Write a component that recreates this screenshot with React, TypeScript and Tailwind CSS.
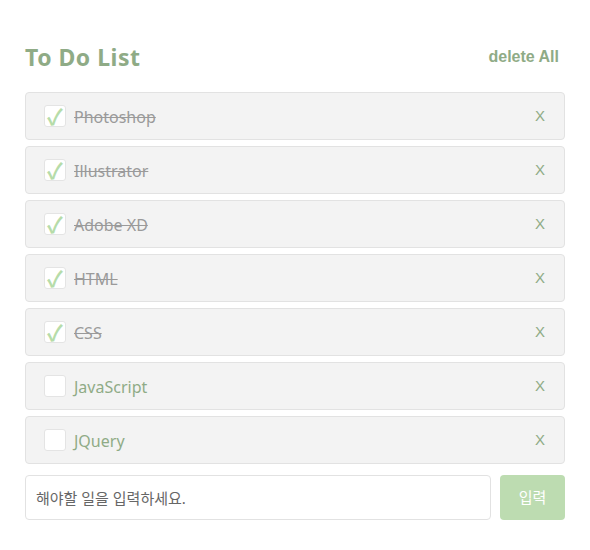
import { useState } from "react";

type Todo = { id: number; text: string; done: boolean };

const initial: Todo[] = [
  { id: 1, text: "Photoshop", done: true },
  { id: 2, text: "Illustrator", done: true },
  { id: 3, text: "Adobe XD", done: true },
  { id: 4, text: "HTML", done: true },
  { id: 5, text: "CSS", done: true },
  { id: 6, text: "JavaScript", done: false },
  { id: 7, text: "JQuery", done: false },
];

export default function App() {
  const [todos, setTodos] = useState(initial);
  const [text, setText] = useState("");

  const toggle = (id: number) =>
    setTodos(todos.map((t) => (t.id === id ? { ...t, done: !t.done } : t)));

  return (
    <div
      className="w-[590px] h-[550px] bg-white px-[25px] pt-[40px]"
      style={{ fontFamily: '"Noto Sans", "Noto Sans CJK KR", sans-serif' }}
    >
      <div className="flex items-center justify-between h-[34px] mb-[18px]">
        <h1 className="text-[23px] font-bold text-[#8fab86] tracking-[0.5px]">
          To Do List
        </h1>
        <button
          onClick={() => setTodos([])}
          className="mr-[6px] text-[16px] font-bold text-[#8fab86]"
          style={{ fontFamily: '"Liberation Sans", Arial, sans-serif' }}
        >
          delete All
        </button>
      </div>

      <ul className="flex flex-col gap-[6px]">
        {todos.map((t) => (
          <li
            key={t.id}
            className="flex items-center h-[48px] bg-[#f3f3f3] border border-[#e2e2e2] rounded-[4px] pl-[18px] pr-[19px]"
          >
            <button
              onClick={() => toggle(t.id)}
              className="flex items-center justify-center w-[22px] h-[22px] bg-white border border-[#e4e4e4] rounded-[3px] text-[#b6dca9] text-[22px] font-bold leading-none"
            >
              {t.done ? "✓" : ""}
            </button>
            <span
              className={`ml-[8px] pt-[1px] flex-1 text-[16px] ${
                t.done ? "line-through text-[#9a9a9a]" : "text-[#8fab86]"
              }`}
            >
              {t.text}
            </span>
            <button
              onClick={() => setTodos(todos.filter((x) => x.id !== t.id))}
              className="text-[15px] text-[#8fab86]"
              style={{ fontFamily: '"Liberation Sans", Arial, sans-serif' }}
            >
              X
            </button>
          </li>
        ))}
      </ul>

      <div className="flex gap-[9px] mt-[11px]">
        <input
          value={text}
          onChange={(e) => setText(e.target.value)}
          placeholder="해야할 일을 입력하세요."
          className="flex-1 h-[45px] bg-white border border-[#e2e2e2] rounded-[4px] px-[10px] text-[15px] text-[#555] placeholder:text-[#666] outline-none"
        />
        <button
          onClick={() => {
            if (!text) return;
            setTodos([...todos, { id: Date.now(), text, done: false }]);
            setText("");
          }}
          className="w-[65px] h-[45px] bg-[#bddcb1] rounded-[4px] text-white text-[15px]"
        >
          입력
        </button>
      </div>
    </div>
  );
}
